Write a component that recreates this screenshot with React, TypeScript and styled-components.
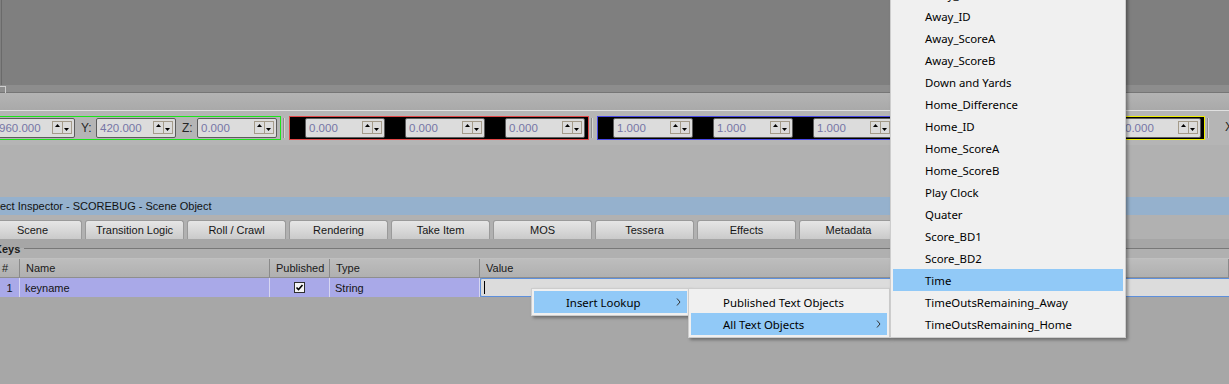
import React from "react";
import styled, { createGlobalStyle } from "styled-components";

const GlobalStyle = createGlobalStyle`
  html, body {
    margin: 0;
    padding: 0;
    background: #a7a7a7;
    overflow: hidden;
  }
  body {
    font-family: "Liberation Sans", Arial, sans-serif;
    font-size: 11px;
    color: #141414;
  }
`;

const Screen = styled.div`
  position: relative;
  width: 1229px;
  height: 384px;
  overflow: hidden;
  background: #a7a7a7;
`;

const Viewport = styled.div`
  height: 85px;
  background: linear-gradient(90deg, #7f7f7f 1px, #6a6a6a 1px, #6a6a6a 2px, #7f7f7f 2px);
`;

const ScrollStrip = styled.div`
  display: flex;
  height: 7px;
  background: #8d8d8d;
  border-bottom: 1px solid #767676;
`;

const ScrollCorner = styled.div`
  width: 5px;
  height: 6px;
  margin-top: 1px;
  border: 1px solid #cfcfcf;
  border-left: none;
  border-bottom: none;
`;

const UpperPanel = styled.div`
  height: 17px;
  background: linear-gradient(#b4b4b4, #a9a9a9);
`;

const Toolbar = styled.div`
  display: flex;
  align-items: flex-start;
  height: 29px;
  padding-top: 5px;
  margin-left: -27px;
  background: #b5b5b5;
  border-top: 1px solid #e0e0e0;
`;

const Group = styled.div<{ $border: string; $fill: string }>`
  display: flex;
  align-items: center;
  box-sizing: border-box;
  height: 24px;
  padding-right: 3px;
  border: 1px solid ${(p) => p.$border};
  background: ${(p) => p.$fill};
  flex-shrink: 0;
`;

const Slot = styled.span<{ $w: number }>`
  width: ${(p) => p.$w}px;
  padding-left: 6px;
  box-sizing: border-box;
  flex-shrink: 0;
  font-size: 12px;
  color: #262626;
`;

const NumBox = styled.div`
  display: flex;
  align-items: flex-start;
  justify-content: space-between;
  box-sizing: border-box;
  width: 80px;
  height: 20px;
  padding: 2px 2px 0 3px;
  border: 1px solid #5c5c5c;
  border-radius: 2px;
  background: #dcdcdc;
  color: #7676a6;
  font-size: 11.5px;
  line-height: 15px;
  flex-shrink: 0;
`;

const Spinner = styled.div`
  display: flex;
  width: 20px;
  height: 13px;
  box-sizing: border-box;
  border: 1px solid #a49b8a;
`;

const SpinHalf = styled.div<{ $down?: boolean }>`
  flex: 1;
  display: flex;
  justify-content: center;
  align-items: ${(p) => (p.$down ? "flex-end" : "flex-start")};
  padding: 2px 0;
  border-left: ${(p) => (p.$down ? "1px solid #a49b8a" : "none")};
`;

const Sep = styled.div`
  width: 1px;
  height: 20px;
  margin: 2px 4px 0 2px;
  background: #8c8c8c;
  border-right: 1px solid #d4d4d4;
  flex-shrink: 0;
`;

const TailLabel = styled.span`
  margin: 4px 0 0 12px;
  font-size: 12px;
  color: #262626;
`;

const Filler = styled.div`
  height: 52px;
  background: #b1b1b1;
`;

const TitleBar = styled.div`
  height: 18px;
  line-height: 18px;
  background: #95b1cd;
  color: #111;
  white-space: nowrap;
`;

const TabGap = styled.div`
  height: 5px;
  background: #b1b1b1;
`;

const TabStrip = styled.div`
  display: flex;
  gap: 3px;
  height: 19px;
  margin-left: -17px;
  background: #b1b1b1;
`;

const Tab = styled.div`
  width: 99px;
  flex-shrink: 0;
  box-sizing: border-box;
  height: 19px;
  line-height: 18px;
  text-align: center;
  border: 1px solid #9a9a9a;
  border-bottom: none;
  border-radius: 3px 3px 0 0;
  background: linear-gradient(#e6e6e6, #cacaca);
  color: #161616;
`;

const KeysBand = styled.div`
  display: flex;
  align-items: center;
  height: 19px;
  background: linear-gradient(#a6a6a6 9px, #b0b0b0 9px);
  border-bottom: 1px solid #c0c0c0;
`;

const Legend = styled.span`
  margin-left: -6px;
  padding-right: 4px;
  font-weight: bold;
  color: #1c1c1c;
`;

const Rule = styled.div`
  flex: 1;
  height: 1px;
  background: #787878;
`;

const HeaderRow = styled.div`
  display: flex;
  height: 18px;
  background: linear-gradient(#bdbdbd, #b0b0b0);
  border-bottom: 1px solid #8e8e8e;
`;

const HeadCell = styled.div<{ $w?: number }>`
  ${(p) => (p.$w ? `width: ${p.$w}px;` : "flex: 1;")}
  box-sizing: border-box;
  flex-shrink: 0;
  padding-left: 6px;
  line-height: 18px;
  border-right: 1px solid #8a8a8a;
  color: #1a1a1a;
  &:first-child {
    padding-left: 2px;
  }
`;

const DataRow = styled.div`
  display: flex;
  height: 19px;
`;

const Cell = styled.div<{ $w: number; $center?: boolean; $pad?: number }>`
  width: ${(p) => p.$w}px;
  flex-shrink: 0;
  box-sizing: border-box;
  display: flex;
  align-items: center;
  justify-content: ${(p) => (p.$center ? "center" : "flex-start")};
  padding-left: ${(p) => p.$pad ?? 5}px;
  background: #a9a9e8;
  border-right: 1px solid #d6d6f2;
  color: #141414;
`;

const ValueEdit = styled.div`
  flex: 1;
  display: flex;
  align-items: center;
  padding-left: 3px;
  box-sizing: border-box;
  background: #dcdcdc;
  border: 1px solid #5d8fdc;
  border-right: none;
  border-radius: 2px 0 0 2px;
`;

const Caret = styled.div`
  width: 1px;
  height: 13px;
  background: #000;
`;

const Check = styled.div`
  width: 11px;
  height: 11px;
  box-sizing: border-box;
  border: 1px solid #2e2e2e;
  background: #f4f4f4;
  display: flex;
  align-items: center;
  justify-content: center;
`;

const Menu = styled.div<{ $left: number; $top: number; $width: number }>`
  position: absolute;
  left: ${(p) => p.$left}px;
  top: ${(p) => p.$top}px;
  width: ${(p) => p.$width}px;
  box-sizing: border-box;
  padding: 2px;
  background: #f0f0f0;
  border: 1px solid #cdcdcd;
  box-shadow: 2px 2px 3px rgba(0, 0, 0, 0.35);
  font-family: "Noto Sans", "Open Sans", sans-serif;
  font-size: 11.4px;
  color: #000;
`;

const MenuItem = styled.div<{ $active?: boolean }>`
  display: flex;
  align-items: center;
  justify-content: space-between;
  height: 22px;
  padding: 0 6px 0 32px;
  background: ${(p) => (p.$active ? "#91c9f7" : "transparent")};
  white-space: nowrap;
`;

const Arrow = () => (
  <svg width="5" height="8" viewBox="0 0 5 8">
    <path d="M1 0.5 L4 4 L1 7.5" fill="none" stroke="#333" strokeWidth="1" />
  </svg>
);

const Spin = () => (
  <Spinner>
    <SpinHalf>
      <svg width="5" height="3" viewBox="0 0 5 3">
        <path d="M0 3 L2.5 0 L5 3 Z" fill="#000" />
      </svg>
    </SpinHalf>
    <SpinHalf $down>
      <svg width="5" height="3" viewBox="0 0 5 3">
        <path d="M0 0 L5 0 L2.5 3 Z" fill="#000" />
      </svg>
    </SpinHalf>
  </Spinner>
);

const Num = ({ value }: { value: string }) => (
  <NumBox>
    <span>{value}</span>
    <Spin />
  </NumBox>
);

const tabs = [
  "Scene",
  "Transition Logic",
  "Roll / Crawl",
  "Rendering",
  "Take Item",
  "MOS",
  "Tessera",
  "Effects",
  "Metadata",
];

const textObjects = [
  "Away_Difference",
  "Away_ID",
  "Away_ScoreA",
  "Away_ScoreB",
  "Down and Yards",
  "Home_Difference",
  "Home_ID",
  "Home_ScoreA",
  "Home_ScoreB",
  "Play Clock",
  "Quater",
  "Score_BD1",
  "Score_BD2",
  "Time",
  "TimeOutsRemaining_Away",
  "TimeOutsRemaining_Home",
];

const TransformGroup = ({ border, values }: { border: string; values: string[] }) => (
  <Group $border={border} $fill="#000">
    {values.map((v, i) => (
      <React.Fragment key={i}>
        <Slot $w={i === 0 ? 15 : 20} />
        <Num value={v} />
      </React.Fragment>
    ))}
  </Group>
);

const App: React.FC = () => {
  return (
    <Screen>
      <GlobalStyle />
      <Viewport />
      <ScrollStrip>
        <ScrollCorner />
      </ScrollStrip>
      <UpperPanel />
      <Toolbar>
        <Group $border="#19e619" $fill="#b5b5b5">
          <Slot $w={21}>X:</Slot>
          <Num value="960.000" />
          <Slot $w={21}>Y:</Slot>
          <Num value="420.000" />
          <Slot $w={21}>Z:</Slot>
          <Num value="0.000" />
        </Group>
        <Sep />
        <TransformGroup border="#e04646" values={["0.000", "0.000", "0.000"]} />
        <Sep />
        <TransformGroup border="#4848e6" values={["1.000", "1.000", "1.000"]} />
        <Sep />
        <TransformGroup border="#f0f000" values={["0.000", "0.000", "0.000"]} />
        <Sep />
        <TailLabel>X:</TailLabel>
      </Toolbar>
      <Filler />
      <TitleBar>ect Inspector - SCOREBUG - Scene Object</TitleBar>
      <TabGap />
      <TabStrip>
        {tabs.map((t) => (
          <Tab key={t}>{t}</Tab>
        ))}
      </TabStrip>
      <KeysBand>
        <Legend>Keys</Legend>
        <Rule />
      </KeysBand>
      <HeaderRow>
        <HeadCell $w={20}>#</HeadCell>
        <HeadCell $w={250}>Name</HeadCell>
        <HeadCell $w={60}>Published</HeadCell>
        <HeadCell $w={150}>Type</HeadCell>
        <HeadCell>Value</HeadCell>
      </HeaderRow>
      <DataRow>
        <Cell $w={20} $pad={0} $center>1</Cell>
        <Cell $w={250}>keyname</Cell>
        <Cell $w={60} $pad={0} $center>
          <Check>
            <svg width="9" height="9" viewBox="0 0 9 9">
              <path d="M1.5 4.5 L3.5 6.5 L7.5 2" fill="none" stroke="#000" strokeWidth="1.6" />
            </svg>
          </Check>
        </Cell>
        <Cell $w={150}>String</Cell>
        <ValueEdit>
          <Caret />
        </ValueEdit>
      </DataRow>

      <Menu $left={531} $top={288} $width={159}>
        <MenuItem $active>
          <span>Insert Lookup</span>
          <Arrow />
        </MenuItem>
      </Menu>
      <Menu $left={688} $top={288} $width={202}>
        <MenuItem>
          <span>Published Text Objects</span>
        </MenuItem>
        <MenuItem $active>
          <span>All Text Objects</span>
          <Arrow />
        </MenuItem>
      </Menu>
      <Menu $left={890} $top={-20} $width={236}>
        {textObjects.map((t) => (
          <MenuItem key={t} $active={t === "Time"}>
            <span>{t}</span>
          </MenuItem>
        ))}
      </Menu>
    </Screen>
  );
};

export default App;
